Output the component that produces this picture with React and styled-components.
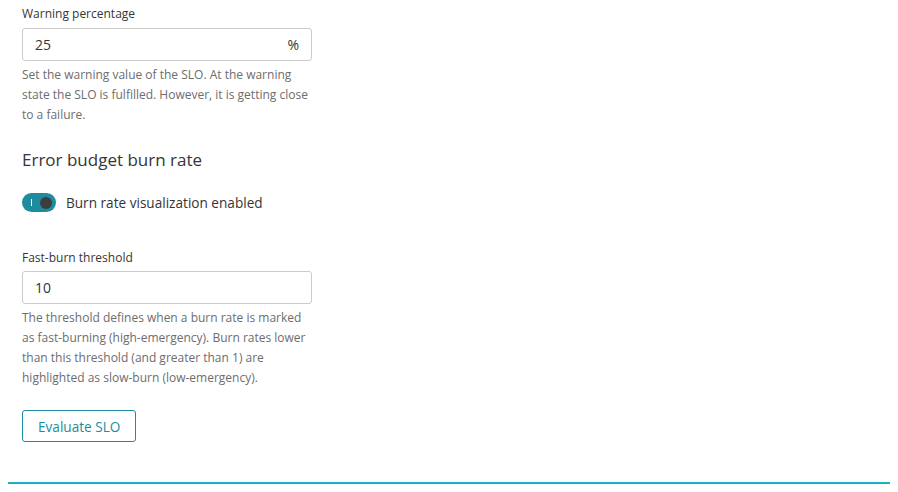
import styled, { createGlobalStyle } from "styled-components";

const GlobalStyle = createGlobalStyle`
  body {
    margin: 0;
    background: #fff;
    font-family: "Open Sans", "Noto Sans", sans-serif;
    color: #454646;
  }
`;

const Page = styled.div`
  padding: 0 8px;
`;

const Content = styled.div`
  padding: 6px 14px 0;
  width: 290px;
`;

const Field = styled.div`
  margin-bottom: ${(p) => p.gap || 0}px;
`;

const Label = styled.div`
  font-size: 12px;
  line-height: 16px;
  color: #353535;
  margin-bottom: ${(p) => p.gap || 6}px;
`;

const InputBox = styled.div`
  display: flex;
  align-items: center;
  justify-content: space-between;
  height: 33px;
  box-sizing: border-box;
  border: 1px solid #cccccc;
  border-radius: 3px;
  padding: 0 12px;
  font-size: 14px;
  color: #353535;
`;

const Help = styled.p`
  margin: 4px 0 0;
  font-size: 12px;
  line-height: 20px;
  color: #6d6d6d;
`;

const Heading = styled.h2`
  margin: 0;
  font-size: 17px;
  font-weight: normal;
  line-height: 24px;
  color: #353535;
`;

const ToggleRow = styled.label`
  display: flex;
  align-items: center;
  gap: 10px;
  margin-top: 21px;
  font-size: 13.6px;
  color: #353535;
`;

const Switch = styled.span`
  position: relative;
  width: 34px;
  height: 19px;
  border-radius: 10px;
  background: #1c8c9e;
  flex-shrink: 0;
  &::before {
    content: "";
    position: absolute;
    left: 9px;
    top: 6px;
    width: 1px;
    height: 7px;
    background: #fff;
  }
  &::after {
    content: "";
    position: absolute;
    right: 4px;
    top: 3.5px;
    width: 12px;
    height: 12px;
    border-radius: 50%;
    background: #3d3d3d;
  }
`;

const Button = styled.button`
  display: block;
  margin-top: 22px;
  height: 32px;
  padding: 0 15px;
  border: 1px solid #1c8c9e;
  border-radius: 3px;
  background: #fff;
  color: #1c8c9e;
  font-family: inherit;
  font-size: 13.6px;
`;

const Divider = styled.div`
  margin-top: 40px;
  height: 2px;
  background: #1ab1c5;
`;

export default function App() {
  return (
    <>
      <GlobalStyle />
      <Page>
        <Content>
          <Field gap={23}>
            <Label>Warning percentage</Label>
            <InputBox>
              <span>25</span>
              <span>%</span>
            </InputBox>
            <Help>
              Set the warning value of the SLO. At the warning state the SLO
              is fulfilled. However, it is getting close to a failure.
            </Help>
          </Field>
          <Field gap={38}>
            <Heading>Error budget burn rate</Heading>
            <ToggleRow>
              <Switch />
              Burn rate visualization enabled
            </ToggleRow>
          </Field>
          <Field>
            <Label gap={5}>Fast-burn threshold</Label>
            <InputBox>
              <span>10</span>
            </InputBox>
            <Help>
              The threshold defines when a burn rate is marked as
              fast-burning (high-emergency). Burn rates lower than this
              threshold (and greater than 1) are highlighted as slow-burn
              (low-emergency).
            </Help>
          </Field>
          <Button>Evaluate SLO</Button>
        </Content>
        <Divider />
      </Page>
    </>
  );
}
